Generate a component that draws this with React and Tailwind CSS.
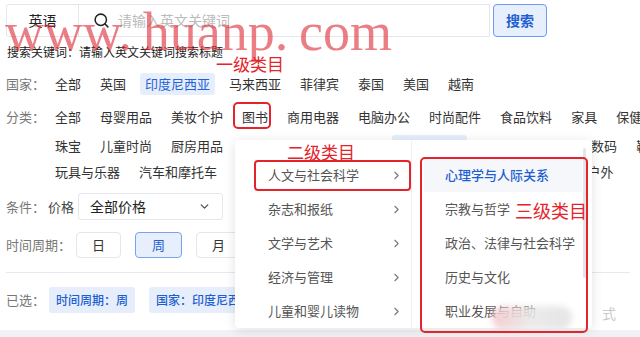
import React from 'react';
import { Search, ChevronDown, ChevronRight } from 'lucide-react';

const countries = ['全部', '英国', '印度尼西亚', '马来西亚', '菲律宾', '泰国', '美国', '越南'];
const catRow1 = ['全部', '母婴用品', '美妆个护', '图书', '商用电器', '电脑办公', '时尚配件', '食品饮料', '家具', '保健与护理'];
const catRow2 = ['珠宝', '儿童时尚', '厨房用品', '箱包', '男装与男士内衣', '穆斯林时尚', '宠物用品', '手机与数码', '鞋靴'];
const catRow3 = ['玩具与乐器', '汽车和摩托车', '工具与家居装修', '办公用品', '艺术手工', '3C数码', '运动与户外'];
const level2 = ['人文与社会科学', '杂志和报纸', '文学与艺术', '经济与管理', '儿童和婴儿读物'];
const level3 = ['心理学与人际关系', '宗教与哲学', '政治、法律与社会科学', '历史与文化', '职业发展与自助'];

// One clickable option in a filter row
const Option = ({ label, active }) => (
  <span
    className={`shrink-0 px-[5px] h-[22px] flex items-center rounded-[3px] whitespace-nowrap ${
      active ? 'bg-[#e6eefc] text-[#1f63d6]' : 'text-[#333]'
    }`}
  >
    {label}
  </span>
);

const FilterRow = ({ label, items, active, className = '' }) => (
  <div className={`flex items-center h-[22px] ${className}`}>
    <span className="w-[44px] shrink-0 text-[#777]">{label}</span>
    <div className="flex items-center gap-[9px]">
      {items.map((it) => (
        <Option key={it} label={it} active={it === active} />
      ))}
    </div>
  </div>
);

const App = () => {
  return (
    <div
      className="relative w-[640px] h-[337px] overflow-hidden bg-white text-[13px] text-[#333]"
      style={{ fontFamily: '"Noto Sans CJK SC", "Noto Sans", sans-serif' }}
    >
      {/* Search bar */}
      <div className="flex mt-[4px] ml-[6px] h-[33px]">
        <div className="flex w-[484px] border border-[#e5e6eb] rounded-l-[3px]">
          <div className="w-[72px] flex items-center justify-center border-r border-[#e5e6eb] text-[14px] text-[#222]">
            英语
          </div>
          <div className="flex items-center pl-[14px] gap-[8px]">
            <Search size={17} strokeWidth={2.2} className="text-[#222]" />
            <span className="text-[#bbb] text-[14px]">请输入英文关键词</span>
          </div>
        </div>
        <button className="ml-[3px] w-[54px] h-[33px] rounded-[4px] border border-[#6d9bef] bg-[#e7effd] text-[#1f5fd1] text-[14px] font-bold">
          搜索
        </button>
      </div>

      {/* Hint */}
      <div className="mt-[6px] ml-[7px] leading-[18px] text-[12px] text-[#222]">
        搜索关键词：请输入英文关键词搜索标题
      </div>

      <div className="ml-[6px]">
        <FilterRow label="国家：" items={countries} active="印度尼西亚" className="mt-[12px]" />

        <div className="mt-[11px] flex flex-col">
          <FilterRow label="分类：" items={catRow1} />
          <FilterRow label="" items={catRow2} active="穆斯林时尚" className="mt-[7px]" />
          <FilterRow label="" items={catRow3} className="mt-[4px]" />
        </div>

        {/* Conditions */}
        <div className="mt-[10px] flex items-center h-[27px]">
          <span className="w-[42px] text-[#777]">条件：</span>
          <span className="w-[30px] text-[#444]">价格</span>
          <div className="w-[145px] h-[27px] flex items-center justify-between px-[11px] border border-[#e5e6eb] rounded-[3px] text-[14px] text-[#222]">
            全部价格
            <ChevronDown size={13} strokeWidth={2.5} className="text-[#555]" />
          </div>
        </div>

        {/* Time period */}
        <div className="mt-[12px] flex items-center h-[26px]">
          <span className="w-[70px] text-[#777]">时间周期：</span>
          <div className="flex gap-[14px]">
            <span className="w-[45px] h-[26px] flex items-center justify-center border border-[#e5e6eb] rounded-[4px]">日</span>
            <span className="w-[47px] h-[26px] flex items-center justify-center border border-[#7aa3ee] bg-[#e7effd] text-[#1f5fd1] rounded-[4px]">周</span>
            <span className="w-[45px] h-[26px] flex items-center justify-center border border-[#e5e6eb] rounded-[4px]">月</span>
          </div>
        </div>

        <div className="mt-[14px] mr-[10px] border-t border-[#e8e9ec]" />

        {/* Selected */}
        <div className="mt-[14px] flex items-center h-[26px]">
          <span className="w-[43px] text-[#777]">已选：</span>
          <div className="flex gap-[14px] text-[12px]">
            <span className="px-[7px] h-[26px] flex items-center rounded-[3px] bg-[#e6eefc] text-[#1f5fd1] font-medium whitespace-nowrap">时间周期：周</span>
            <span className="px-[7px] h-[26px] flex items-center rounded-[3px] bg-[#e6eefc] text-[#1f5fd1] font-medium whitespace-nowrap">国家：印度尼西亚</span>
          </div>
        </div>
      </div>

      <div className="absolute left-0 right-0 bottom-0 h-[7px] bg-[#f1f2f5]" />

      {/* Category cascade popup */}
      <div className="absolute left-[235px] top-[140px] w-[357px] h-[188px] bg-white rounded-[4px] shadow-[0_2px_12px_rgba(0,0,0,0.12)] flex">
        <div className="w-[177px] pt-[18px] border-r border-[#eef0f3]">
          {level2.map((it) => (
            <div key={it} className="h-[34px] flex items-center justify-between pl-[33px] pr-[8px] text-[#555]">
              {it}
              <ChevronRight size={13} strokeWidth={2} className="text-[#777]" />
            </div>
          ))}
        </div>
        <div className="relative flex-1 pt-[18px] pl-[12px] pr-[10px]">
          {level3.map((it, i) => (
            <div
              key={it}
              className={`h-[34px] flex items-center pl-[21px] ${
                i === 0 ? 'bg-[#f5f7fa] text-[#1f5fd1] font-medium' : 'text-[#555]'
              }`}
            >
              {it}
            </div>
          ))}
          <div className="absolute right-[6px] top-[8px] w-[3px] h-[130px] rounded bg-[#e4e5e8]" />
        </div>
      </div>

      {/* Blur smudge at bottom right */}
      <div className="absolute left-[492px] top-[306px] w-[80px] h-[24px] rounded-[12px] bg-gradient-to-r from-[#f3c9cc] via-[#e9e9ea] to-[#e3e3e5] blur-[3px] opacity-90" />
      <span className="absolute left-[602px] top-[303px] text-[#c9c9cc] text-[14px]">式</span>

      {/* Annotations */}
      <div className="absolute left-[233px] top-[102px] w-[38px] h-[27px] border-2 border-[#e4232b] rounded-[5px]" />
      <div className="absolute left-[254px] top-[160px] w-[157px] h-[31px] border-2 border-[#e4232b] rounded-[4px]" />
      <div className="absolute left-[420px] top-[157px] w-[168px] h-[176px] border-2 border-[#e4232b] rounded-[5px]" />
      <span className="absolute left-[216px] top-[53px] text-[17px] leading-[22px] text-[#e4232b]">一级类目</span>
      <span className="absolute left-[287px] top-[141px] text-[17px] leading-[22px] text-[#e4232b]">二级类目</span>
      <span className="absolute left-[515px] top-[199px] text-[18px] leading-[22px] text-[#e4232b]">三级类目</span>

      {/* Watermark */}
      <span
        className="absolute left-[5px] top-[5px] text-[54px] leading-none text-[rgba(222,40,50,0.6)] whitespace-nowrap pointer-events-none"
        style={{ fontFamily: '"Liberation Serif", serif' }}
      >
        {'www.\u2009huanp.\u2009com'}
      </span>
    </div>
  );
};

export default App;
